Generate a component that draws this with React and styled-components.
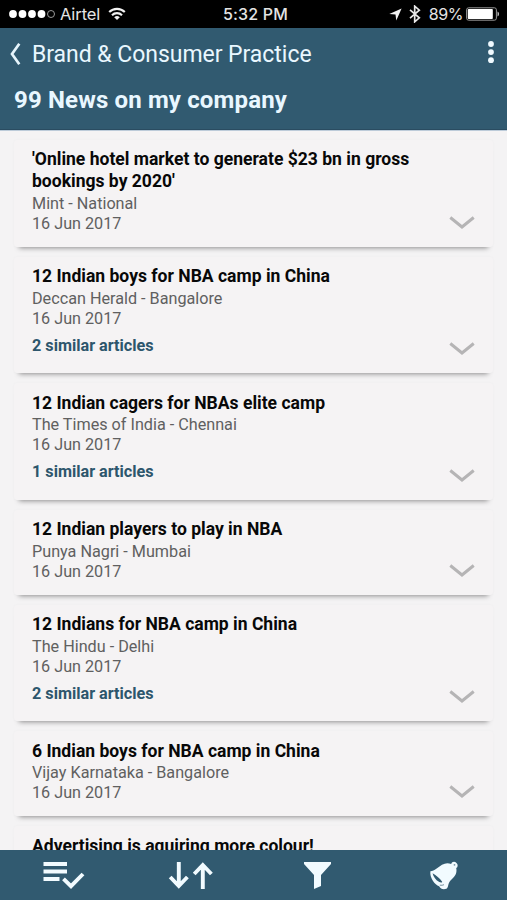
import React from "react";
import styled, { createGlobalStyle } from "styled-components";

const Global = createGlobalStyle`
  * { box-sizing: border-box; }
  body { margin: 0; background: #f4f3f4; font-family: Roboto, sans-serif; }
`;

const Screen = styled.div`
  width: 507px;
  height: 900px;
  display: flex;
  flex-direction: column;
  overflow: hidden;
  background: #f4f3f4;
`;

const StatusBar = styled.div`
  height: 28px;
  flex: none;
  display: grid;
  grid-template-columns: 1fr auto 1fr;
  align-items: center;
  padding: 0 7px 0 9px;
  background: #000;
  color: #e4e4e4;
  font: 400 17px/26px Inter, sans-serif;
`;

const StatusGroup = styled.div`
  display: flex;
  align-items: center;
  justify-content: ${(p) => (p.$end ? "flex-end" : "flex-start")};
`;

const Dots = styled.svg`
  width: 46px;
  height: 10px;
  margin-right: 5px;
`;

const Carrier = styled.span`
  font-size: 16.5px;
  letter-spacing: -0.1px;
  margin-right: 8px;
`;

const Clock = styled.span`
  font-size: 16px;
  font-weight: 500;
  letter-spacing: 0.15px;
  padding-left: 2px;
`;

const Percent = styled.span`
  font-size: 16px;
  letter-spacing: -0.4px;
  margin: 0 3px 0 8px;
`;

const Bluetooth = styled.svg`
  width: 12px;
  height: 18px;
  margin-left: 7px;
`;

const Header = styled.header`
  height: 102px;
  flex: none;
  background: #315a70;
  color: #e9f7ff;
  border-bottom: 1px solid #2a4c61;
`;

const TitleRow = styled.div`
  height: 52px;
  display: flex;
  align-items: center;
  padding: 0 11px 0 9px;
`;

const PageTitle = styled.h1`
  flex: 1;
  margin: 1px 0 0 11px;
  font-size: 23px;
  font-weight: 400;
  line-height: 30px;
  letter-spacing: -0.04px;
  white-space: nowrap;
`;

const Subtitle = styled.h2`
  margin: 5px 0 0 14px;
  font-size: 24px;
  font-weight: 700;
  line-height: 30px;
  letter-spacing: 0.15px;
  white-space: nowrap;
`;

const List = styled.main`
  flex: 1;
  min-height: 0;
  overflow: hidden;
  display: flex;
  flex-direction: column;
  gap: 10px;
  padding: 9.5px 14px 0;
  box-shadow: inset 0 1px #bccbd9;
`;

const Card = styled.article`
  flex: none;
  display: flex;
  justify-content: space-between;
  align-items: flex-end;
  padding: 8.5px 18px 12.6px 18px;
  border-radius: 3px;
  background: #f5f3f4;
  box-shadow: 0 6px 5px -5px rgba(0, 0, 0, 0.42), 0 0 3px rgba(0, 0, 0, 0.03);
`;

const CardTitle = styled.h3`
  width: 400px;
  margin: 0 0 1.5px;
  color: #080808;
  font-size: 17.55px;
  font-weight: 700;
  line-height: 22px;
`;

const Meta = styled.p`
  margin: 0;
  color: #606060;
  font-size: 16.2px;
  line-height: 20.2px;
`;

const Similar = styled.p`
  margin: 6.6px 0 5px;
  color: #2d566c;
  font-size: 16.2px;
  font-weight: 700;
  line-height: 20px;
`;

const Chevron = styled.svg`
  width: 26px;
  height: 14px;
  flex: none;
  margin-bottom: 4.4px;
`;

const TabBar = styled.nav`
  height: 50px;
  flex: none;
  display: grid;
  grid-template-columns: repeat(4, 1fr);
  place-items: center;
  background: #315a70;
  color: #f2fbff;
`;

const TabIcon = styled.svg`
  width: 46px;
  height: 34px;
`;

const articles = [
  { title: "'Online hotel market to generate $23 bn in gross bookings by 2020'", source: "Mint - National" },
  { title: "12 Indian boys for NBA camp in China", source: "Deccan Herald - Bangalore", similar: 2 },
  { title: "12 Indian cagers for NBAs elite camp", source: "The Times of India - Chennai", similar: 1 },
  { title: "12 Indian players to play in NBA", source: "Punya Nagri - Mumbai" },
  { title: "12 Indians for NBA camp in China", source: "The Hindu - Delhi", similar: 2 },
  { title: "6 Indian boys for NBA camp in China", source: "Vijay Karnataka - Bangalore" },
  { title: "Advertising is aquiring more colour!" },
];

function NewsCard({ item }) {
  return (
    <Card>
      <div>
        <CardTitle>{item.title}</CardTitle>
        {item.source && (
          <>
            <Meta>{item.source}</Meta>
            <Meta>16 Jun 2017</Meta>
          </>
        )}
        {item.similar && <Similar>{item.similar} similar articles</Similar>}
      </div>
      {item.source && (
        <Chevron viewBox="0 0 26 14" fill="none">
          <path d="M1.3 1.5 13 11 24.7 1.5" stroke="#b5b4b5" strokeWidth="3" />
        </Chevron>
      )}
    </Card>
  );
}

export default function App() {
  return (
    <>
      <Global />
      <Screen>
        <StatusBar>
          <StatusGroup>
            <Dots viewBox="0 0 46 10">
              {[4, 13.5, 23, 32.5].map((x) => (
                <circle key={x} cx={x} cy="5" r="3.9" fill="#fff" />
              ))}
              <circle cx="42" cy="5" r="3.5" fill="none" stroke="#aaa" strokeWidth="0.9" />
            </Dots>
            <Carrier>Airtel</Carrier>
            <svg width="18" height="14" viewBox="0 0 18 14" fill="none" stroke="#f2f2f2" strokeWidth="2.1">
              <path d="M1.2 5.1a11 11 0 0 1 15.6 0M4 8.2a7 7 0 0 1 10 0" />
              <path d="M9 13 6.2 10.3a4 4 0 0 1 5.6 0Z" fill="#f2f2f2" stroke="none" />
            </svg>
          </StatusGroup>
          <Clock>5:32 PM</Clock>
          <StatusGroup $end>
            <svg width="13" height="13" viewBox="0 0 13 13">
              <path d="M12.6.5 7.3 12.4 6.5 6.6.3 6Z" fill="#f2f2f2" />
            </svg>
            <Bluetooth viewBox="0 0 12 18" fill="none" stroke="#e8e8e8" strokeWidth="1.7">
              <path d="m1 4.8 9.3 8-4.6 4V1.2l4.6 4-9.3 8" />
            </Bluetooth>
            <Percent>89%</Percent>
            <svg width="34" height="14" viewBox="0 0 34 14">
              <rect x=".6" y=".8" width="29.8" height="12.4" rx="2" fill="none" stroke="#999" />
              <rect x="1.8" y="2" width="25" height="10" rx=".8" fill="#fff" />
              <path d="M31.5 4.5c2.1.8 2.1 4.2 0 5Z" fill="#bbb" />
            </svg>
          </StatusGroup>
        </StatusBar>
        <Header>
          <TitleRow>
            <svg width="12" height="24" viewBox="0 0 12 24" fill="none">
              <path d="M10.3 1.8 3 12l7.3 10.2" stroke="#e6f5fc" strokeWidth="2.7" />
            </svg>
            <PageTitle>Brand &amp; Consumer Practice</PageTitle>
            <svg width="10" height="26" viewBox="0 0 10 26" fill="#f0faff">
              <circle cx="5" cy="3" r="2.9" />
              <circle cx="5" cy="11.1" r="2.9" />
              <circle cx="5" cy="19.2" r="2.9" />
            </svg>
          </TitleRow>
          <Subtitle>99 News on my company</Subtitle>
        </Header>
        <List>
          {articles.map((item) => (
            <NewsCard key={item.title} item={item} />
          ))}
        </List>
        <TabBar>
          <TabIcon viewBox="0 0 46 34" fill="none" stroke="currentColor">
            <path d="M3.5 6H27M3.5 13.5H27M3.5 21H19.5" strokeWidth="4.2" />
            <path d="m23.5 20.8 7.5 7.4L43 16" strokeWidth="3.9" />
          </TabIcon>
          <TabIcon viewBox="0 0 46 34" fill="none" stroke="currentColor" strokeWidth="3.9">
            <path d="M11.8 4v24M3.2 19l8.6 9 8.6-9M35.8 31V7M27.2 16l8.6-9 8.6 9" />
          </TabIcon>
          <TabIcon viewBox="0 0 46 34" fill="currentColor">
            <path d="M10 4h27v2L27 17v11l-7 3V17L10 6Z" />
          </TabIcon>
          <TabIcon viewBox="0 0 46 34" fill="currentColor">
            <path d="M9.4 13.3C13.5 13 17.2 9 21 6.7c3.2-1.8 6.2-2 9.2-.7.6-2.5 3.6-2.7 5.3-1.1s1.5 4.2-.3 5.1c1 4.4-.5 7.7-4.2 11-2.3 2.2-3.3 3.7-3.9 6.7-.3 1.4-.7 2.3-1.7 3.1-3.3 1.1-5.8.1-7.3-2.5-4-1.2-9.7-8.4-8.7-15Z" />
            <path d="M11.6 15.2c3.8 2.2 6.9 4.9 9.4 8.2.9 1.2-1.4 1.5-3.1.4-3.3-2.1-5.6-5-6.3-8.6Z" fill="#315a70" />
            <path d="M18.8 27.2c1.6.2 3 .1 4.2-.5" fill="none" stroke="#7893a1" strokeWidth="1" />
            <circle cx="33.5" cy="6.8" r="0.9" fill="#7893a1" />
          </TabIcon>
        </TabBar>
      </Screen>
    </>
  );
}
